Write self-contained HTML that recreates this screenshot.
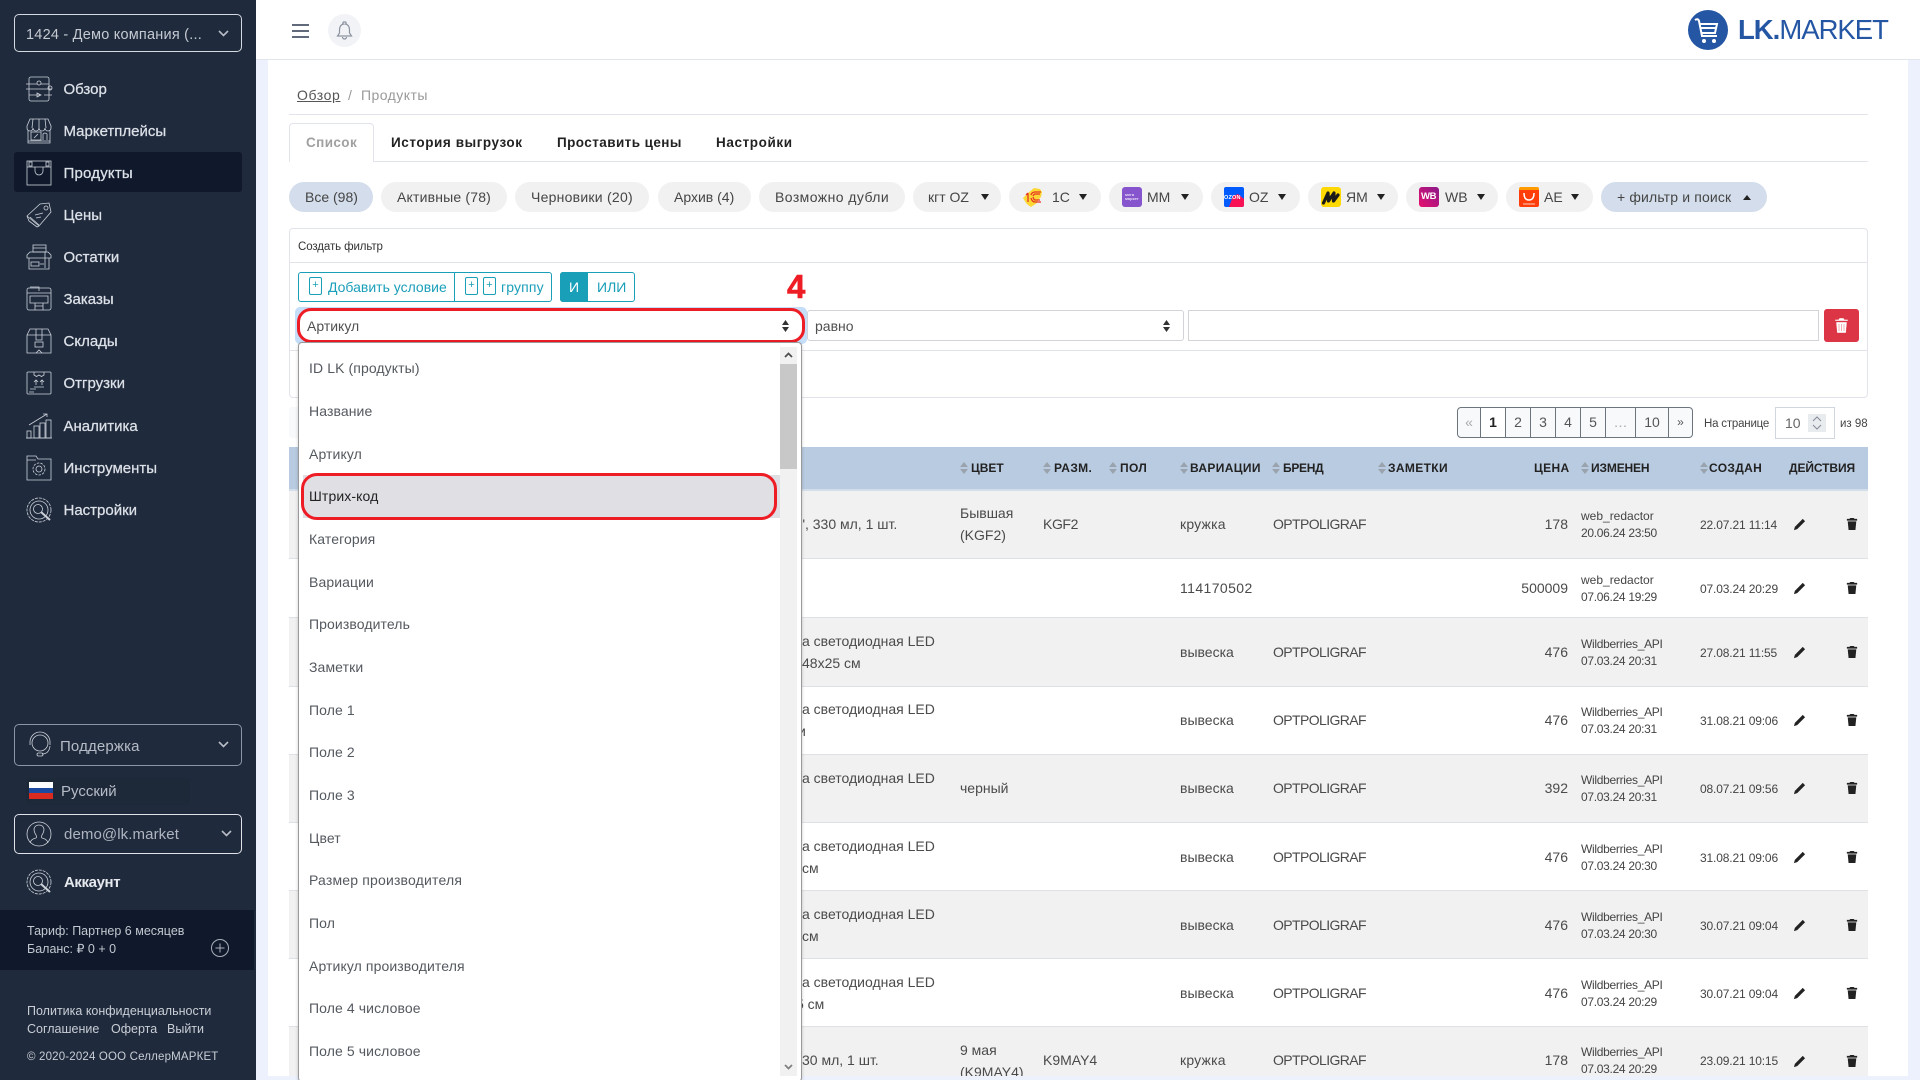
<!DOCTYPE html>
<html lang="ru"><head><meta charset="utf-8"><title>LK.MARKET</title>
<style>
html,body{margin:0;padding:0;width:1920px;height:1080px;overflow:hidden;background:#edf1fd}
body{position:relative;font-family:"Liberation Sans",Arial,sans-serif;color:#444}
div,span,svg{position:absolute;box-sizing:border-box}
span{white-space:nowrap;line-height:20px}
svg{overflow:visible}
.n{left:63.5px;margin-top:1px;font-size:15px;color:#dde1e8;-webkit-text-stroke:.25px #dde1e8}
.ic{left:26px;width:26px;height:26px;fill:none;stroke:#cdd2da;stroke-width:.8}
.p{top:182px;height:30px;border-radius:15px;background:#f1f1f2}
.pt{top:187px;font-size:14px;color:#454545}
.b{background:#d3ddeb}
.car{top:194px;width:12px;height:7px;fill:#222}
.row{left:289px;width:1579px;border-bottom:1px solid #dee2e6}
.s{background:#f1f1f2}
.c{font-size:14px;color:#4a4a4a}
.br{letter-spacing:-.6px}
.m{font-size:12px;color:#444}
.d1{letter-spacing:-.3px}
.w{letter-spacing:-.3px}
.d2{letter-spacing:-.15px}
.th{top:458px;font-size:12px;font-weight:bold;color:#222;letter-spacing:.35px}
.ar{top:462px;width:8px;height:12px;fill:#9aa3ad}
.o{left:309px;font-size:14px;color:#54595f;letter-spacing:.1px}
.pg{top:407px;height:31px;border:1px solid #6c757d;border-left:0;background:#f8f9fa;font-size:14px;color:#555;text-align:center;line-height:29px}
.tb{font-size:13.5px;font-weight:bold;top:133px;color:#222;letter-spacing:.55px}
.fa{fill:#222;stroke:none;width:12px;height:12px;margin-top:1px}
.ed{left:1793px;width:13px;height:13px}.tr{left:1846px}
</style></head><body>

<!-- page -->
<div style="left:268px;top:0;width:1640px;height:1076px;background:#fff"></div>
<div style="left:0;top:0;width:1920px;height:60px;background:#fff;border-bottom:1px solid #e2e5ec"></div>

<!-- sidebar -->
<div style="left:0;top:0;width:256px;height:1080px;background:#1f2a3c"></div>
<div style="left:14px;top:14px;width:228px;height:38px;border:1px solid #d5d9e0;border-radius:5px"></div>
<span style="left:26px;top:25px;font-size:14.5px;color:#c5cad2;letter-spacing:.22px">1424 - Демо компания (...</span>
<svg style="left:218px;top:30px;width:11px;height:7px" viewBox="0 0 11 7"><path d="M1 1l4.5 4.5L10 1" fill="none" stroke="#b8bdc6" stroke-width="1.6"/></svg>

<div style="left:14px;top:152px;width:228px;height:40px;background:#0f192b;border-radius:3px"></div>

<svg class="ic" style="top:76px" viewBox="0 0 26 26"><rect x="3" y="1" width="20" height="24" rx="2"/><path d="M0 8h11M15 8h8M0 13h26M3 19h11M18 19h8"/><circle cx="13" cy="7" r="2"/><circle cx="24" cy="12" r="2"/><path d="M11 17l4 2-4 2z"/></svg>
<span class="n" style="top:79px">Обзор</span>
<svg class="ic" style="top:118px" viewBox="0 0 26 26"><path d="M1 8 4 1H22l3 7v2a3 3 0 0 1-6 0 3 3 0 0 1-6 0 3 3 0 0 1-6 0 3 3 0 0 1-6 0zM7 1 6 10M13 1v9M19 1l1 9M2 12V25H24V12"/><rect x="5" y="14" width="10" height="8"/><path d="M17 22v-6q2-2 4 0v6M8 20l4-4M2 23h22"/></svg>
<span class="n" style="top:121px">Маркетплейсы</span>
<svg class="ic" style="top:160px" viewBox="0 0 26 26"><rect x="1" y="1" width="24" height="24"/><path d="M1 7h24M9 7v4a4 4 0 0 0 8 0V7"/><rect x="3" y="2" width="3" height="4"/><rect x="20" y="2" width="3" height="4"/></svg>
<span class="n" style="top:163px;letter-spacing:.2px">Продукты</span>
<svg class="ic" style="top:202px" viewBox="0 0 26 26"><path d="M1 14 14 2l9-1 2 9-12 14zM4 15l9 8M1 14l2 5 8 6 2-1"/><circle cx="20" cy="6" r="2"/><path d="M9 13l8-2M10 16l5-1"/></svg>
<span class="n" style="top:205px">Цены</span>
<svg class="ic" style="top:244px" viewBox="0 0 26 26"><rect x="7" y="1" width="13" height="7"/><path d="M7 4h13M1 11 4 8H22l3 3v3H1zM3 14V25H23V14"/><rect x="5" y="18" width="8" height="4"/><path d="M14 20h4M19 8v16"/></svg>
<span class="n" style="top:247px">Остатки</span>
<svg class="ic" style="top:286px" viewBox="0 0 26 26"><rect x="1" y="2" width="24" height="22" rx="2"/><path d="M1 7h24M4 10h18v7H4zM9 17v7M17 17v7M9 20h8M4 1h9v4"/></svg>
<span class="n" style="top:289px">Заказы</span>
<svg class="ic" style="top:328px" viewBox="0 0 26 26"><path d="M1 7 4 1H22l3 6v18H1zM1 7h24M10 1v11h6V1"/><rect x="9" y="14" width="8" height="5"/><path d="M10 25l3-3 3 3"/></svg>
<span class="n" style="top:331px">Склады</span>
<svg class="ic" style="top:370px" viewBox="0 0 26 26"><rect x="1" y="2" width="24" height="22" rx="1"/><path d="M8 2v3l2.500 1.500L13 5l2.500 1.500L18 5V2M10 15v-5M16 15v-5M8 12l2-2 2 2M14 12l2-2 2 2M8 17h10M4 19h6M3 22h5"/></svg>
<span class="n" style="top:373px">Отгрузки</span>
<svg class="ic" style="top:413px" viewBox="0 0 26 26"><rect x="1" y="18" width="4" height="7"/><rect x="8" y="13" width="5" height="12"/><rect x="14" y="10" width="5" height="15"/><rect x="20" y="7" width="5" height="18"/><path d="M3 12 21 1m-4 0h4v3M0 25h26"/></svg>
<span class="n" style="top:416px">Аналитика</span>
<svg class="ic" style="top:455px" viewBox="0 0 26 26"><path d="M1 25V1H10l2 3H25V25ZM1 5H10M12 4h13"/><circle cx="13" cy="14" r="3"/><circle cx="13" cy="14" r="6" stroke-dasharray="2.500 1.200"/></svg>
<span class="n" style="top:458px">Инструменты</span>
<svg class="ic" style="top:497px" viewBox="0 0 26 26"><circle cx="13" cy="13" r="12" stroke-dasharray="3 1"/><circle cx="13" cy="13" r="9"/><circle cx="12" cy="12" r="4.500"/><path d="M15 15l9 8" stroke-width="2"/></svg>
<span class="n" style="top:500px">Настройки</span>

<div style="left:14px;top:724px;width:228px;height:42px;border:1px solid #8d96a6;border-radius:5px"></div>
<svg class="ic" style="left:28px;top:732px;width:24px;height:26px" viewBox="0 0 24 26"><circle cx="12" cy="11" r="8"/><path d="M2 13V10A10 10 0 0 1 22 10V13M22 14q-1 8-8 8"/><rect x="9" y="21" width="6" height="3" rx="1.500"/></svg>
<span style="left:60px;top:737px;font-size:15px;color:#b6bcc7;letter-spacing:.15px">Поддержка</span>
<svg style="left:218px;top:741px;width:11px;height:7px" viewBox="0 0 11 7"><path d="M1 1l4.500 4.500L10 1" fill="none" stroke="#b8bdc6" stroke-width="1.600"/></svg>

<div style="left:26px;top:778px;width:164px;height:27px;background:#1d2838;border-radius:4px"></div>
<div style="left:29px;top:782px;width:24px;height:5.500px;background:#fff"></div>
<div style="left:29px;top:787.500px;width:24px;height:5.500px;background:#1b4aa0"></div>
<div style="left:29px;top:793px;width:24px;height:5.500px;background:#d92b20"></div>
<span style="left:61px;top:782px;font-size:15px;color:#b6bcc7">Русский</span>

<div style="left:14px;top:814px;width:228px;height:40px;border:1px solid #e0e3e8;border-radius:5px"></div>
<svg class="ic" style="top:821px" viewBox="0 0 26 26"><circle cx="13" cy="13" r="12"/><path d="M4 22q1-4 6-5 1-1 0-3-2-3-2-6 1-4 5-4t5 4q0 3-2 6-1 2 0 3 5 1 6 5"/></svg>
<span style="left:64px;top:825px;font-size:15px;color:#aeb5c0;letter-spacing:.1px">demo@lk.market</span>
<svg style="left:221px;top:830px;width:11px;height:7px" viewBox="0 0 11 7"><path d="M1 1l4.500 4.500L10 1" fill="none" stroke="#b8bdc6" stroke-width="1.600"/></svg>

<svg class="ic" style="top:869px" viewBox="0 0 26 26"><circle cx="13" cy="13" r="12" stroke-dasharray="3 1"/><circle cx="13" cy="13" r="9"/><circle cx="12" cy="12" r="4.500"/><path d="M15 15l9 8" stroke-width="2"/></svg>
<span style="left:64px;top:873px;font-size:15px;font-weight:bold;color:#e6e9ee;letter-spacing:-.4px">Аккаунт</span>

<div style="left:0;top:910px;width:254px;height:60px;background:#0f192b"></div>
<span style="left:27px;top:921px;font-size:12.500px;color:#c3c8d0">Тариф: Партнер 6 месяцев</span>
<span style="left:27px;top:939px;font-size:12.500px;color:#c3c8d0">Баланс: ₽ 0 + 0</span>
<svg style="left:211px;top:939px;width:18px;height:18px" viewBox="0 0 18 18"><circle cx="9" cy="9" r="8.500" fill="none" stroke="#aab0ba"/><path d="M4.500 9h9M9 4.500v9" stroke="#aab0ba"/></svg>
<span style="left:27px;top:1001px;font-size:12.500px;color:#c9ced6">Политика конфиденциальности</span>
<span style="left:27px;top:1019px;font-size:12.500px;color:#c9ced6">Соглашение</span>
<span style="left:111px;top:1019px;font-size:12.500px;color:#c9ced6">Оферта</span>
<span style="left:167px;top:1019px;font-size:12.500px;color:#c9ced6">Выйти</span>
<span style="left:27px;top:1047px;font-size:11.500px;color:#c9ced6;letter-spacing:.17px">© 2020-2024 ООО СеллерМАРКЕТ</span>

<!-- top bar -->
<svg style="left:292px;top:23px;width:17px;height:16px" viewBox="0 0 17 16"><path d="M0 2h17M0 8h17M0 14h17" stroke="#4a5568" stroke-width="1.800"/></svg>
<div style="left:328px;top:14px;width:33px;height:33px;border-radius:50%;background:#f2f3f6"></div>
<svg style="left:336px;top:21px;width:17px;height:19px" viewBox="0 0 17 19"><path d="M8.500 1a1 1 0 0 1 1 2q4 1 4 6v3l2 3H1.500l2-3V9q0-5 4-6a1 1 0 0 1 1-2zM6.500 16a2 2 0 0 0 4 0" fill="none" stroke="#8b93a0" stroke-width="1.200"/></svg>

<svg style="left:1688px;top:10px;width:40px;height:40px" viewBox="0 0 40 40"><circle cx="20" cy="20" r="20" fill="#2456a4"/><path d="M7 10q3-2 4 1l3 15h15M12 14h17l-2 9H14M13 18h15" fill="none" stroke="#fff" stroke-width="2"/><circle cx="16" cy="31" r="2" fill="#fff"/><circle cx="26" cy="31" r="2" fill="#fff"/></svg>
<span style="left:1738px;top:15px;font-size:27.500px;line-height:30px;color:#2456a4;letter-spacing:-1px"><b>LK.</b>MARKET</span>

<!-- breadcrumb -->
<span style="left:297px;top:85px;font-size:14px;color:#555;text-decoration:underline;letter-spacing:.6px">Обзор</span>
<span style="left:348px;top:85px;font-size:14px;color:#999">/</span>
<span style="left:361px;top:85px;font-size:14px;color:#999;letter-spacing:.45px">Продукты</span>
<div style="left:289px;top:114px;width:1579px;height:1px;background:#e2e4ec"></div>

<!-- tabs -->
<div style="left:289px;top:161px;width:1579px;height:1px;background:#e2e4ec"></div>
<div style="left:289px;top:123px;width:85px;height:39px;background:#fff;border:1px solid #e2e4ec;border-bottom:0;border-radius:4px 4px 0 0"></div>
<span class="tb" style="left:306px;color:#a0a0a0;letter-spacing:.4px">Список</span>
<span class="tb" style="left:391px;letter-spacing:.58px">История выгрузок</span>
<span class="tb" style="left:557px;letter-spacing:.43px">Проставить цены</span>
<span class="tb" style="left:716px;letter-spacing:.6px">Настройки</span>

<!-- pills -->
<div class="p b" style="left:289px;width:84px"></div><span class="pt" style="left:305px">Все (98)</span>
<div class="p" style="left:381px;width:126px"></div><span class="pt" style="left:397px;letter-spacing:.18px">Активные (78)</span>
<div class="p" style="left:515px;width:134px"></div><span class="pt" style="left:531px;letter-spacing:.25px">Черновики (20)</span>
<div class="p" style="left:658px;width:93px"></div><span class="pt" style="left:674px">Архив (4)</span>
<div class="p" style="left:759px;width:146px"></div><span class="pt" style="left:775px;letter-spacing:.43px">Возможно дубли</span>
<div class="p" style="left:913px;width:88px"></div><span class="pt" style="left:928px">кгт OZ</span>
<svg class="car" style="left:979px" viewBox="0 0 12 7"><path d="M2 0h8L6 6z"/></svg>
<div class="p" style="left:1009px;width:92px"></div><span class="pt" style="left:1052px">1С</span>
<svg class="car" style="left:1077px" viewBox="0 0 12 7"><path d="M2 0h8L6 6z"/></svg>
<div class="p" style="left:1109px;width:94px"></div><span class="pt" style="left:1147px">ММ</span>
<svg class="car" style="left:1179px" viewBox="0 0 12 7"><path d="M2 0h8L6 6z"/></svg>
<div class="p" style="left:1211px;width:89px"></div><span class="pt" style="left:1249px">OZ</span>
<svg class="car" style="left:1276px" viewBox="0 0 12 7"><path d="M2 0h8L6 6z"/></svg>
<div class="p" style="left:1308px;width:90px"></div><span class="pt" style="left:1346px">ЯМ</span>
<svg class="car" style="left:1375px" viewBox="0 0 12 7"><path d="M2 0h8L6 6z"/></svg>
<div class="p" style="left:1406px;width:92px"></div><span class="pt" style="left:1445px">WB</span>
<svg class="car" style="left:1475px" viewBox="0 0 12 7"><path d="M2 0h8L6 6z"/></svg>
<div class="p" style="left:1506px;width:87px"></div><span class="pt" style="left:1544px">AE</span>
<svg class="car" style="left:1569px" viewBox="0 0 12 7"><path d="M2 0h8L6 6z"/></svg>
<div class="p b" style="left:1601px;width:166px"></div><span class="pt" style="left:1617px;letter-spacing:.15px">+ фильтр и поиск</span>
<svg class="car" style="left:1741px" viewBox="0 0 12 7"><path d="M2 6h8L6 1z"/></svg>

<!-- marketplace icons -->
<svg style="left:1022px;top:187px;width:22px;height:20px" viewBox="0 0 22 20"><path d="M1 11 6 6l6-5 6 1 2 3-1 5-3 3-1 3-6 4-3-2-2-2z" fill="#fdd835"/><path d="M6 6v9M4 8l2-2M9 8q1-3 4-3h6M9 11q1 4 4 4h6M11 9q1-2 2-2h5M11 10q1 3 2 3h5" fill="none" stroke="#e53424" stroke-width="1.300"/></svg>
<div style="left:1122px;top:187px;width:20px;height:20px;background:#8654cc;border-radius:3px"></div>
<span style="left:1125px;top:193px;font-size:4px;line-height:4px;color:#e6d8f5;font-weight:bold">мега<br>маркет</span>
<div style="left:1224px;top:187px;width:20px;height:20px;background:#005bff;border-radius:2px;overflow:hidden"><svg style="left:0;top:0;width:20px;height:20px" viewBox="0 0 20 20"><path d="M5 20 9 9l5-2 6 5v8z" fill="#f91155"/></svg></div>
<span style="left:1224px;top:195px;font-size:5.500px;line-height:6px;color:#fff;font-weight:bold;letter-spacing:.2px">OZON</span>
<div style="left:1321px;top:187px;width:20px;height:20px;background:#ffd800;border-radius:3px"></div>
<svg style="left:1321px;top:187px;width:20px;height:20px" viewBox="0 0 20 20"><path d="M2.500 16 7 6l.5 8L13 6l-.5 8L17 8" fill="none" stroke="#1a1a1a" stroke-width="3.200" stroke-linejoin="round" stroke-linecap="round"/></svg>
<div style="left:1419px;top:187px;width:20px;height:20px;border-radius:3px;background:linear-gradient(45deg,#e8106e,#8a1a8a)"></div>
<span style="left:1421px;top:192px;font-size:9.500px;line-height:10px;color:#fff;font-weight:bold;letter-spacing:-.3px">WB</span>
<div style="left:1519px;top:187px;width:20px;height:20px;background:#ff3d0a;border-radius:2px;border-top:3px solid #ff9a00"></div>
<svg style="left:1519px;top:187px;width:20px;height:20px" viewBox="0 0 20 20"><path d="M5 6q0 7 5 7t5-7" fill="none" stroke="#fff" stroke-width="1.500"/><path d="M4 17h12" stroke="#ffd0c0" stroke-width="1"/></svg>

<!-- filter card -->
<div style="left:289px;top:228px;width:1579px;height:170px;border:1px solid #e2e4ec;border-radius:4px"></div>
<div style="left:289px;top:262px;width:1579px;height:1px;background:#e2e4ec"></div>
<div style="left:289px;top:350px;width:1579px;height:1px;background:#e2e4ec"></div>
<span style="left:298px;top:237px;font-size:11.500px;color:#333;letter-spacing:-.1px">Создать фильтр</span>

<div style="left:298px;top:272px;width:254px;height:30px;border:1px solid #1a9fb8;border-radius:3px"></div>
<div style="left:454px;top:272px;width:1px;height:30px;background:#1a9fb8"></div>
<div style="left:309px;top:277px;width:13px;height:18px;border:1px solid #1a9fb8;border-radius:2px;font-size:11px;line-height:15px;text-align:center;color:#1a9fb8">+</div>
<span style="left:328px;top:277px;font-size:14px;color:#1a9fb8">Добавить условие</span>
<div style="left:465px;top:277px;width:13px;height:18px;border:1px solid #1a9fb8;border-radius:2px;font-size:11px;line-height:15px;text-align:center;color:#1a9fb8">+</div>
<div style="left:483px;top:277px;width:13px;height:18px;border:1px solid #1a9fb8;border-radius:2px;font-size:11px;line-height:15px;text-align:center;color:#1a9fb8">+</div>
<span style="left:501px;top:277px;font-size:14px;color:#1a9fb8;letter-spacing:.15px">группу</span>
<div style="left:560px;top:272px;width:75px;height:30px;border:1px solid #1a9fb8;border-radius:3px"></div>
<div style="left:560px;top:272px;width:28px;height:30px;background:#1a9fb8;border-radius:3px 0 0 3px"></div>
<span style="left:569px;top:277px;font-size:14px;color:#fff">И</span>
<span style="left:597px;top:277px;font-size:14px;color:#1a9fb8">ИЛИ</span>
<span style="left:787px;top:274px;font-size:33px;line-height:26px;font-weight:bold;color:#ee1c25;-webkit-text-stroke:.6px #ee1c25">4</span>

<div style="left:295px;top:307px;width:512px;height:37px;background:#c5def9;border-radius:5px"></div>
<div style="left:297px;top:308px;width:508px;height:35px;background:#fff;border:3px solid #ee1c25;border-radius:14px"></div>
<span style="left:307px;top:316px;font-size:14px;color:#505050">Артикул</span>
<svg style="left:781px;top:319px;width:9px;height:14px" viewBox="0 0 9 14"><path d="M1 6h7L4.500 1zM1 8h7l-3.500 5z" fill="#333"/></svg>

<div style="left:807px;top:310px;width:377px;height:31px;border:1px solid #d2d4da;border-radius:3px"></div>
<span style="left:815px;top:316px;font-size:14px;color:#505050">равно</span>
<svg style="left:1162px;top:319px;width:9px;height:14px" viewBox="0 0 9 14"><path d="M1 6h7L4.500 1zM1 8h7l-3.500 5z" fill="#333"/></svg>
<div style="left:1188px;top:310px;width:631px;height:31px;border:1px solid #d2d4da"></div>
<div style="left:1824px;top:309px;width:35px;height:33px;background:#dc3545;border-radius:3px"></div>
<svg style="left:1835px;top:318px;width:13px;height:15px" viewBox="0 0 13 15"><path d="M4.500 0h4l1 1.500H13V3H0V1.500h3.500zM1 4h11l-1 11H2zM4 6v7M6.500 6v7M9 6v7" fill="#fff" stroke="#dc3545" stroke-width=".4"/></svg>

<!-- toolbar band + pagination -->
<div style="left:289px;top:407px;width:60px;height:31px;background:#f8f9fa;border-radius:3px"></div>
<div class="pg" style="left:1457px;width:24px;border-left:1px solid #6c757d;border-radius:4px 0 0 4px;color:#aaa">«</div>
<div class="pg" style="left:1481px;width:25px;background:#fff;color:#222;font-weight:bold">1</div>
<div class="pg" style="left:1506px;width:25px">2</div>
<div class="pg" style="left:1531px;width:25px">3</div>
<div class="pg" style="left:1556px;width:25px">4</div>
<div class="pg" style="left:1581px;width:25px">5</div>
<div class="pg" style="left:1606px;width:30px;color:#aaa">…</div>
<div class="pg" style="left:1636px;width:33px">10</div>
<div class="pg" style="left:1669px;width:24px;border-radius:0 4px 4px 0;font-size:12px">»</div>
<span style="left:1704px;top:414px;font-size:11.500px;color:#444;letter-spacing:-.2px">На странице</span>
<div style="left:1775px;top:407px;width:60px;height:32px;border:1px solid #d0d6de"></div>
<span style="left:1785px;top:413px;font-size:14px;color:#666">10</span>
<div style="left:1808px;top:414px;width:18px;height:18px;background:#e9ecef"></div>
<svg style="left:1812px;top:416px;width:10px;height:14px" viewBox="0 0 10 14"><path d="M1 5l4-4 4 4M1 9l4 4 4-4" fill="none" stroke="#889" stroke-width="1"/></svg>
<span style="left:1840px;top:414px;font-size:11.500px;color:#444">из 98</span>

<!-- table -->
<div style="left:289px;top:447px;width:1579px;height:42px;background:#b9cbe1"></div>
<div style="left:289px;top:489px;width:1579px;height:2px;background:#d3deeb"></div>
<div class="row s" style="top:491px;height:68px"></div>
<div class="row" style="top:559px;height:59px"></div>
<div class="row s" style="top:618px;height:69px"></div>
<div class="row" style="top:687px;height:68px"></div>
<div class="row s" style="top:755px;height:68px"></div>
<div class="row" style="top:823px;height:68px"></div>
<div class="row s" style="top:891px;height:68px"></div>
<div class="row" style="top:959px;height:68px"></div>
<div class="s" style="left:289px;top:1027px;width:1579px;height:49px"></div>

<svg class="ar" style="left:960px" viewBox="0 0 8 12"><path d="M0 5h8L4 0zM0 7h8l-4 5z"/></svg><span class="th" style="left:971px;letter-spacing:0">ЦВЕТ</span>
<svg class="ar" style="left:1043px" viewBox="0 0 8 12"><path d="M0 5h8L4 0zM0 7h8l-4 5z"/></svg><span class="th" style="left:1054px">РАЗМ.</span>
<svg class="ar" style="left:1109px" viewBox="0 0 8 12"><path d="M0 5h8L4 0zM0 7h8l-4 5z"/></svg><span class="th" style="left:1120px">ПОЛ</span>
<svg class="ar" style="left:1180px" viewBox="0 0 8 12"><path d="M0 5h8L4 0zM0 7h8l-4 5z"/></svg><span class="th" style="left:1190px">ВАРИАЦИИ</span>
<svg class="ar" style="left:1272px" viewBox="0 0 8 12"><path d="M0 5h8L4 0zM0 7h8l-4 5z"/></svg><span class="th" style="left:1283px;letter-spacing:-.3px">БРЕНД</span>
<svg class="ar" style="left:1378px" viewBox="0 0 8 12"><path d="M0 5h8L4 0zM0 7h8l-4 5z"/></svg><span class="th" style="left:1388px">ЗАМЕТКИ</span>
<span class="th" style="left:1534px">ЦЕНА</span>
<svg class="ar" style="left:1581px" viewBox="0 0 8 12"><path d="M0 5h8L4 0zM0 7h8l-4 5z"/></svg><span class="th" style="left:1591px;letter-spacing:-.15px">ИЗМЕНЕН</span>
<svg class="ar" style="left:1700px" viewBox="0 0 8 12"><path d="M0 5h8L4 0zM0 7h8l-4 5z"/></svg><span class="th" style="left:1709px">СОЗДАН</span>
<span class="th" style="left:1789px;letter-spacing:-.1px">ДЕЙСТВИЯ</span>

<!-- row 1 -->
<span class="c" style="left:800px;top:514px">", 330 мл, 1 шт.</span>
<span class="c" style="left:960px;top:503px">Бывшая</span><span class="c" style="left:960px;top:525px">(KGF2)</span>
<span class="c" style="left:1043px;top:514px;letter-spacing:-.4px">KGF2</span>
<span class="c" style="left:1180px;top:514px;letter-spacing:.2px">кружка</span>
<span class="c br" style="left:1273px;top:514px">OPTPOLIGRAF</span>
<span class="c" style="right:352px;top:514px">178</span>
<span class="m" style="left:1581px;top:506px">web_redactor</span><span class="m d1" style="left:1581px;top:523px">20.06.24 23:50</span>
<span class="m d2" style="left:1700px;top:515px">22.07.21 11:14</span>
<!-- row 2 -->
<span class="c" style="left:1180px;top:578px;letter-spacing:.4px">114170502</span>
<span class="c" style="right:352px;top:578px">500009</span>
<span class="m" style="left:1581px;top:570px">web_redactor</span><span class="m d1" style="left:1581px;top:587px">07.06.24 19:29</span>
<span class="m d2" style="left:1700px;top:579px">07.03.24 20:29</span>
<!-- row 3 -->
<span class="c" style="left:802px;top:631px">а светодиодная LED</span><span class="c" style="left:802px;top:653px">48x25 см</span>
<span class="c" style="left:1180px;top:642px">вывеска</span>
<span class="c br" style="left:1273px;top:642px">OPTPOLIGRAF</span>
<span class="c" style="right:352px;top:642px">476</span>
<span class="m w" style="left:1581px;top:634px">Wildberries_API</span><span class="m d1" style="left:1581px;top:651px">07.03.24 20:31</span>
<span class="m d2" style="left:1700px;top:643px">27.08.21 11:55</span>
<!-- row 4 -->
<span class="c" style="left:802px;top:699px">а светодиодная LED</span><span class="c" style="left:798px;top:721px">и</span>
<span class="c" style="left:1180px;top:710px">вывеска</span>
<span class="c br" style="left:1273px;top:710px">OPTPOLIGRAF</span>
<span class="c" style="right:352px;top:710px">476</span>
<span class="m w" style="left:1581px;top:702px">Wildberries_API</span><span class="m d1" style="left:1581px;top:719px">07.03.24 20:31</span>
<span class="m d2" style="left:1700px;top:711px">31.08.21 09:06</span>
<!-- row 5 -->
<span class="c" style="left:802px;top:768px">а светодиодная LED</span>
<span class="c" style="left:960px;top:778px">черный</span>
<span class="c" style="left:1180px;top:778px">вывеска</span>
<span class="c br" style="left:1273px;top:778px">OPTPOLIGRAF</span>
<span class="c" style="right:352px;top:778px">392</span>
<span class="m w" style="left:1581px;top:770px">Wildberries_API</span><span class="m d1" style="left:1581px;top:787px">07.03.24 20:31</span>
<span class="m d2" style="left:1700px;top:779px">08.07.21 09:56</span>
<!-- row 6 -->
<span class="c" style="left:802px;top:836px">а светодиодная LED</span><span class="c" style="left:802px;top:858px">см</span>
<span class="c" style="left:1180px;top:847px">вывеска</span>
<span class="c br" style="left:1273px;top:847px">OPTPOLIGRAF</span>
<span class="c" style="right:352px;top:847px">476</span>
<span class="m w" style="left:1581px;top:839px">Wildberries_API</span><span class="m d1" style="left:1581px;top:856px">07.03.24 20:30</span>
<span class="m d2" style="left:1700px;top:848px">31.08.21 09:06</span>
<!-- row 7 -->
<span class="c" style="left:802px;top:904px">а светодиодная LED</span><span class="c" style="left:802px;top:926px">см</span>
<span class="c" style="left:1180px;top:915px">вывеска</span>
<span class="c br" style="left:1273px;top:915px">OPTPOLIGRAF</span>
<span class="c" style="right:352px;top:915px">476</span>
<span class="m w" style="left:1581px;top:907px">Wildberries_API</span><span class="m d1" style="left:1581px;top:924px">07.03.24 20:30</span>
<span class="m d2" style="left:1700px;top:916px">30.07.21 09:04</span>
<!-- row 8 -->
<span class="c" style="left:802px;top:972px">а светодиодная LED</span><span class="c" style="left:796px;top:994px">5 см</span>
<span class="c" style="left:1180px;top:983px">вывеска</span>
<span class="c br" style="left:1273px;top:983px">OPTPOLIGRAF</span>
<span class="c" style="right:352px;top:983px">476</span>
<span class="m w" style="left:1581px;top:975px">Wildberries_API</span><span class="m d1" style="left:1581px;top:992px">07.03.24 20:29</span>
<span class="m d2" style="left:1700px;top:984px">30.07.21 09:04</span>
<!-- row 9 (clipped) -->
<div style="left:289px;top:1027px;width:1579px;height:49px;overflow:hidden">
<span class="c" style="left:513px;top:23px">30 мл, 1 шт.</span>
<span class="c" style="left:671px;top:13px">9 мая</span><span class="c" style="left:671px;top:35px">(K9MAY4)</span>
<span class="c" style="left:754px;top:23px">K9MAY4</span>
<span class="c" style="left:891px;top:23px;letter-spacing:.2px">кружка</span>
<span class="c br" style="left:984px;top:23px">OPTPOLIGRAF</span>
<span class="c" style="right:300px;top:23px">178</span>
<span class="m w" style="left:1292px;top:15px">Wildberries_API</span><span class="m d1" style="left:1292px;top:32px">07.03.24 20:29</span>
<span class="m d2" style="left:1411px;top:24px">23.09.21 10:15</span>
</div>

<!-- action icons -->
<svg class="fa ed" style="top:517px" viewBox="0 0 14 14"><path d="M10.500 1 13 3.500 4.500 12 1 13l1-3.500z"/></svg>
<svg class="fa tr" style="top:517px" viewBox="0 0 14 14"><path d="M5 0h4l1 1h3v2H1V1h3zM2 4h10l-1 10H3z"/></svg>
<svg class="fa ed" style="top:581px" viewBox="0 0 14 14"><path d="M10.500 1 13 3.500 4.500 12 1 13l1-3.500z"/></svg>
<svg class="fa tr" style="top:581px" viewBox="0 0 14 14"><path d="M5 0h4l1 1h3v2H1V1h3zM2 4h10l-1 10H3z"/></svg>
<svg class="fa ed" style="top:645px" viewBox="0 0 14 14"><path d="M10.500 1 13 3.500 4.500 12 1 13l1-3.500z"/></svg>
<svg class="fa tr" style="top:645px" viewBox="0 0 14 14"><path d="M5 0h4l1 1h3v2H1V1h3zM2 4h10l-1 10H3z"/></svg>
<svg class="fa ed" style="top:713px" viewBox="0 0 14 14"><path d="M10.500 1 13 3.500 4.500 12 1 13l1-3.500z"/></svg>
<svg class="fa tr" style="top:713px" viewBox="0 0 14 14"><path d="M5 0h4l1 1h3v2H1V1h3zM2 4h10l-1 10H3z"/></svg>
<svg class="fa ed" style="top:781px" viewBox="0 0 14 14"><path d="M10.500 1 13 3.500 4.500 12 1 13l1-3.500z"/></svg>
<svg class="fa tr" style="top:781px" viewBox="0 0 14 14"><path d="M5 0h4l1 1h3v2H1V1h3zM2 4h10l-1 10H3z"/></svg>
<svg class="fa ed" style="top:850px" viewBox="0 0 14 14"><path d="M10.500 1 13 3.500 4.500 12 1 13l1-3.500z"/></svg>
<svg class="fa tr" style="top:850px" viewBox="0 0 14 14"><path d="M5 0h4l1 1h3v2H1V1h3zM2 4h10l-1 10H3z"/></svg>
<svg class="fa ed" style="top:918px" viewBox="0 0 14 14"><path d="M10.500 1 13 3.500 4.500 12 1 13l1-3.500z"/></svg>
<svg class="fa tr" style="top:918px" viewBox="0 0 14 14"><path d="M5 0h4l1 1h3v2H1V1h3zM2 4h10l-1 10H3z"/></svg>
<svg class="fa ed" style="top:986px" viewBox="0 0 14 14"><path d="M10.500 1 13 3.500 4.500 12 1 13l1-3.500z"/></svg>
<svg class="fa tr" style="top:986px" viewBox="0 0 14 14"><path d="M5 0h4l1 1h3v2H1V1h3zM2 4h10l-1 10H3z"/></svg>
<svg class="fa ed" style="top:1054px" viewBox="0 0 14 14"><path d="M10.500 1 13 3.500 4.500 12 1 13l1-3.500z"/></svg>
<svg class="fa tr" style="top:1054px" viewBox="0 0 14 14"><path d="M5 0h4l1 1h3v2H1V1h3zM2 4h10l-1 10H3z"/></svg>

<!-- dropdown -->
<div style="left:298px;top:342px;width:504px;height:740px;background:#fff;border:1px solid #9a9a9a;border-radius:4px;box-shadow:0 1px 3px rgba(0,0,0,.2)"></div>
<div style="left:780px;top:347px;width:17px;height:729px;background:#f1f1f1"></div>
<div style="left:780px;top:364px;width:17px;height:105px;background:#c8c8c8"></div>
<svg style="left:784px;top:352px;width:9px;height:6px" viewBox="0 0 9 6"><path d="M1 5l3.500-3.500L8 5" fill="none" stroke="#505050" stroke-width="1.800"/></svg>
<svg style="left:784px;top:1064px;width:9px;height:6px" viewBox="0 0 9 6"><path d="M1 1l3.500 3.500L8 1" fill="none" stroke="#808080" stroke-width="1.800"/></svg>
<div style="left:303px;top:475px;width:477px;height:43px;background:#dfdfe4"></div>
<span class="o" style="top:358px">ID LK (продукты)</span>
<span class="o" style="top:401px">Название</span>
<span class="o" style="top:444px">Артикул</span>
<span class="o" style="top:486px;color:#222">Штрих-код</span>
<span class="o" style="top:529px">Категория</span>
<span class="o" style="top:572px">Вариации</span>
<span class="o" style="top:614px">Производитель</span>
<span class="o" style="top:657px">Заметки</span>
<span class="o" style="top:700px">Поле 1</span>
<span class="o" style="top:742px">Поле 2</span>
<span class="o" style="top:785px">Поле 3</span>
<span class="o" style="top:828px">Цвет</span>
<span class="o" style="top:870px;letter-spacing:.18px">Размер производителя</span>
<span class="o" style="top:913px">Пол</span>
<span class="o" style="top:956px">Артикул производителя</span>
<span class="o" style="top:998px">Поле 4 числовое</span>
<span class="o" style="top:1041px">Поле 5 числовое</span>
<div style="left:301px;top:473px;width:476px;height:47px;border:3px solid #ee1c25;border-radius:16px"></div>

</body></html>
